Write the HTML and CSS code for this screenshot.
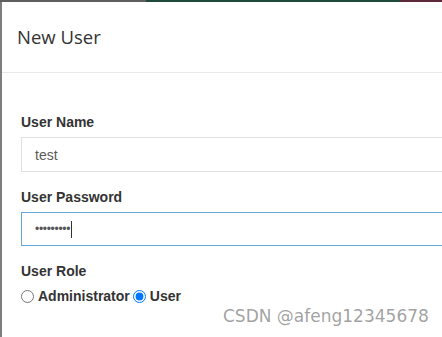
FILE: index.html
```html
<html><head><title>New User</title>
<link rel="stylesheet" href="styles.css">
</head>
<body>
    <div class="topbar">
        <span class="seg seg-gray"></span>
        <span class="seg seg-green"></span>
        <span class="seg seg-red"></span>
    </div>
    <div class="modal">
        <div class="modal-header">
            <h4 class="modal-title">New User</h4>
        </div>
        <form class="modal-body">
            <div class="form-group">
                <label for="username">User Name</label>
                <input type="text" id="username" class="form-control" value="test">
            </div>
            <div class="form-group">
                <label for="password">User Password</label>
                <div class="form-control focused">
                    <span class="dots">&bull;&bull;&bull;&bull;&bull;&bull;&bull;&bull;&bull;</span><span class="caret"></span>
                </div>
            </div>
            <div class="form-group">
                <label>User Role</label>
                <div class="radio-row">
                    <input type="radio" name="role" id="roleAdmin">
                    <label for="roleAdmin" class="radio-label">Administrator</label>
                    <input type="radio" name="role" id="roleUser" checked>
                    <label for="roleUser" class="radio-label">User</label>
                </div>
            </div>
        </form>
        <div class="watermark">CSDN @afeng12345678</div>
    </div>
</body></html>
```

FILE: styles.css
```css
body {
    margin: 0;
    overflow: hidden;
    font-family: "Liberation Sans", Arial, sans-serif;
    background: white;
}

.topbar {
    display: flex;
    height: 2px;
}

.seg {
    display: block;
    height: 100%;
}

.seg-gray {
    width: 146px;
    background: #5e5e5e;
}

.seg-green {
    width: 254px;
    background: #1f4a3a;
}

.seg-red {
    flex: 1;
    background: #5a2a3a;
}

/* the dialog continues past the right edge of the shot */
.modal {
    position: relative;
    height: 335px;
    border-left: 2px solid #7d7d7d;
    background: white;
}

.modal-header {
    padding: 21px 15px 21px;
    border-bottom: 1px solid #e8e8e8;
}

.modal-title {
    margin: 0;
    font-family: "Open Sans", "Liberation Sans", sans-serif;
    font-weight: 400;
    font-size: 18.5px;
    line-height: 28px;
    color: #333;
}

.modal-body {
    margin: 0;
    padding: 39px 0 0 19px;
}

.form-group {
    margin-bottom: 15px;
}

label {
    display: block;
    margin-bottom: 5px;
    font-size: 14px;
    line-height: 20px;
    font-weight: 700;
    color: #333;
}

.form-control {
    display: flex;
    align-items: center;
    box-sizing: border-box;
    width: 100%;
    height: 35px;
    padding: 0 13px;
    border: 1px solid #e0e0e0;
    border-right: none;
    font-family: "Liberation Sans", Arial, sans-serif;
    font-size: 14px;
    color: #5a5a5a;
    outline: none;
}

.focused {
    border-color: #66a9d8;
    border-right: none;
    height: 34px;
}

.dots {
    font-size: 12px;
    letter-spacing: -0.3px;
    color: #555;
}

.caret {
    display: inline-block;
    width: 1px;
    height: 17px;
    margin-left: 1px;
    background: #333;
}

.radio-row {
    display: flex;
    align-items: center;
    margin-top: 5px;
}

.radio-row input[type="radio"] {
    width: 13px;
    height: 13px;
    margin: 0 4px 0 0;
}

.radio-label {
    display: inline;
    margin: 0 3px 0 0;
}

.watermark {
    position: absolute;
    left: 221px;
    top: 304px;
    font-family: "DejaVu Sans", sans-serif;
    font-size: 17px;
    color: rgba(120, 120, 120, 0.7);
}
```
